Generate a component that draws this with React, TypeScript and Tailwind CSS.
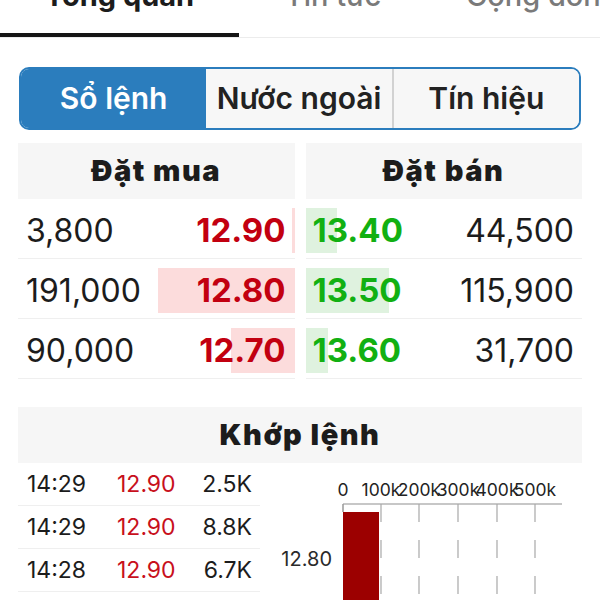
const bids = [
  { qty: '3,800', price: '12.90', bar: 3 },
  { qty: '191,000', price: '12.80', bar: 137 },
  { qty: '90,000', price: '12.70', bar: 64 },
];

const asks = [
  { price: '13.40', qty: '44,500', bar: 31 },
  { price: '13.50', qty: '115,900', bar: 83 },
  { price: '13.60', qty: '31,700', bar: 22 },
];

const trades = [
  { time: '14:29', price: '12.90', vol: '2.5K' },
  { time: '14:29', price: '12.90', vol: '8.8K' },
  { time: '14:28', price: '12.90', vol: '6.7K' },
];

const ticks = [
  { x: 83, label: '0' },
  { x: 121, label: '100k' },
  { x: 159, label: '200k' },
  { x: 198, label: '300k' },
  { x: 237, label: '400k' },
  { x: 275, label: '500k' },
];

function VolumeChart() {
  return (
    <svg width="320" height="137" viewBox="0 0 320 137">
      {ticks.map((t) => (
        <text
          key={t.label}
          x={t.x}
          y="33"
          textAnchor="middle"
          fontSize="17.5"
          fontFamily="Inter, sans-serif"
          fill="#222"
        >
          {t.label}
        </text>
      ))}
      <line x1="83" y1="41" x2="302" y2="41" stroke="#b5b5b5" strokeWidth="1.5" />
      <line x1="83" y1="41" x2="83" y2="49" stroke="#999" strokeWidth="1.5" />
      {ticks.slice(1).map((t) => (
        <line
          key={t.x}
          x1={t.x}
          y1="41"
          x2={t.x}
          y2="137"
          stroke="#a8a8a8"
          strokeWidth="1.2"
          strokeDasharray="18 18"
        />
      ))}
      <rect x="83" y="49" width="36" height="100" fill="#9c0000" />
      <text
        x="72"
        y="103"
        textAnchor="end"
        fontSize="20"
        fontFamily="Inter, sans-serif"
        fill="#2a2a2a"
      >
        12.80
      </text>
    </svg>
  );
}

export default function App() {
  return (
    <div className="w-[600px] h-[600px] overflow-hidden bg-white font-['Inter',sans-serif] text-[#1c1c1c]">
      {/* top tabs */}
      <div className="flex h-[38px] border-b border-[#ececec] overflow-hidden">
        <div className="w-[239px] shrink-0 border-b-[4px] border-[#151515]">
          <div className="-mt-[19px] text-center text-[29px] font-bold leading-none">Tổng quan</div>
        </div>
        <div className="w-[188px] shrink-0">
          <div className="-mt-[19px] text-center text-[29px] font-medium leading-none text-[#7a7a7a]">Tin tức</div>
        </div>
        <div className="pl-[39px] shrink-0 whitespace-nowrap">
          <div className="-mt-[19px] text-[29px] font-medium leading-none text-[#7a7a7a]">Cộng đồng</div>
        </div>
      </div>

      {/* segmented control */}
      <div className="mt-[29px] mx-[19px] h-[63px] flex overflow-hidden rounded-[10px] border-2 border-[#2b7dbd]">
        <div className="flex-1 flex items-center justify-center bg-[#2b7dbd] text-white text-[30px] font-semibold">
          Sổ lệnh
        </div>
        <div className="flex-1 flex items-center justify-center bg-[#f7f7f7] text-[30px] font-semibold text-[#222]">
          Nước ngoài
        </div>
        <div className="flex-1 flex items-center justify-center bg-[#f7f7f7] border-l-2 border-[#d2d2d2] text-[30px] font-semibold text-[#222]">
          Tín hiệu
        </div>
      </div>

      {/* order book */}
      <div className="mt-[13px] mx-[18px] grid grid-cols-2 gap-x-[11px]">
        <div>
          <div className="h-[56px] flex items-center justify-center bg-[#f6f6f6] text-[29px] font-black tracking-[1.5px]">Đặt mua</div>
          {bids.map((b) => (
            <div key={b.price} className="relative h-[60px] flex items-center justify-between pt-[4px] pl-[8px] pr-[9px] border-b border-[#efefef]">
              <div className="absolute right-0 top-[9px] bottom-[5px] bg-[#fcdcdc]" style={{ width: b.bar }} />
              <span className="relative text-[32px]">{b.qty}</span>
              <span className="relative text-[33px] font-bold text-[#c20010]">{b.price}</span>
            </div>
          ))}
        </div>
        <div>
          <div className="h-[56px] flex items-center justify-center bg-[#f6f6f6] text-[29px] font-black tracking-[1.5px]">Đặt bán</div>
          {asks.map((a) => (
            <div key={a.price} className="relative h-[60px] flex items-center justify-between pt-[4px] pl-[7px] pr-[8px] border-b border-[#efefef]">
              <div className="absolute left-0 top-[9px] bottom-[5px] bg-[#dff2df]" style={{ width: a.bar }} />
              <span className="relative text-[33px] font-bold text-[#12b012]">{a.price}</span>
              <span className="relative text-[32px]">{a.qty}</span>
            </div>
          ))}
        </div>
      </div>

      {/* matched orders */}
      <div className="mt-[28px] mx-[18px]">
        <div className="h-[56px] flex items-center justify-center bg-[#f6f6f6] text-[29px] font-black tracking-[1.5px]">Khớp lệnh</div>
        <div className="flex">
          <div className="w-[242px] shrink-0">
            {trades.map((t, i) => (
              <div key={i} className="h-[43px] flex items-center pl-[9px] pr-[8px] border-b border-[#efefef] text-[23px]">
                <span className="w-[90px]">{t.time}</span>
                <span className="text-[#c8101c]">{t.price}</span>
                <span className="ml-auto">{t.vol}</span>
              </div>
            ))}
          </div>
          <VolumeChart />
        </div>
      </div>
    </div>
  );
}
